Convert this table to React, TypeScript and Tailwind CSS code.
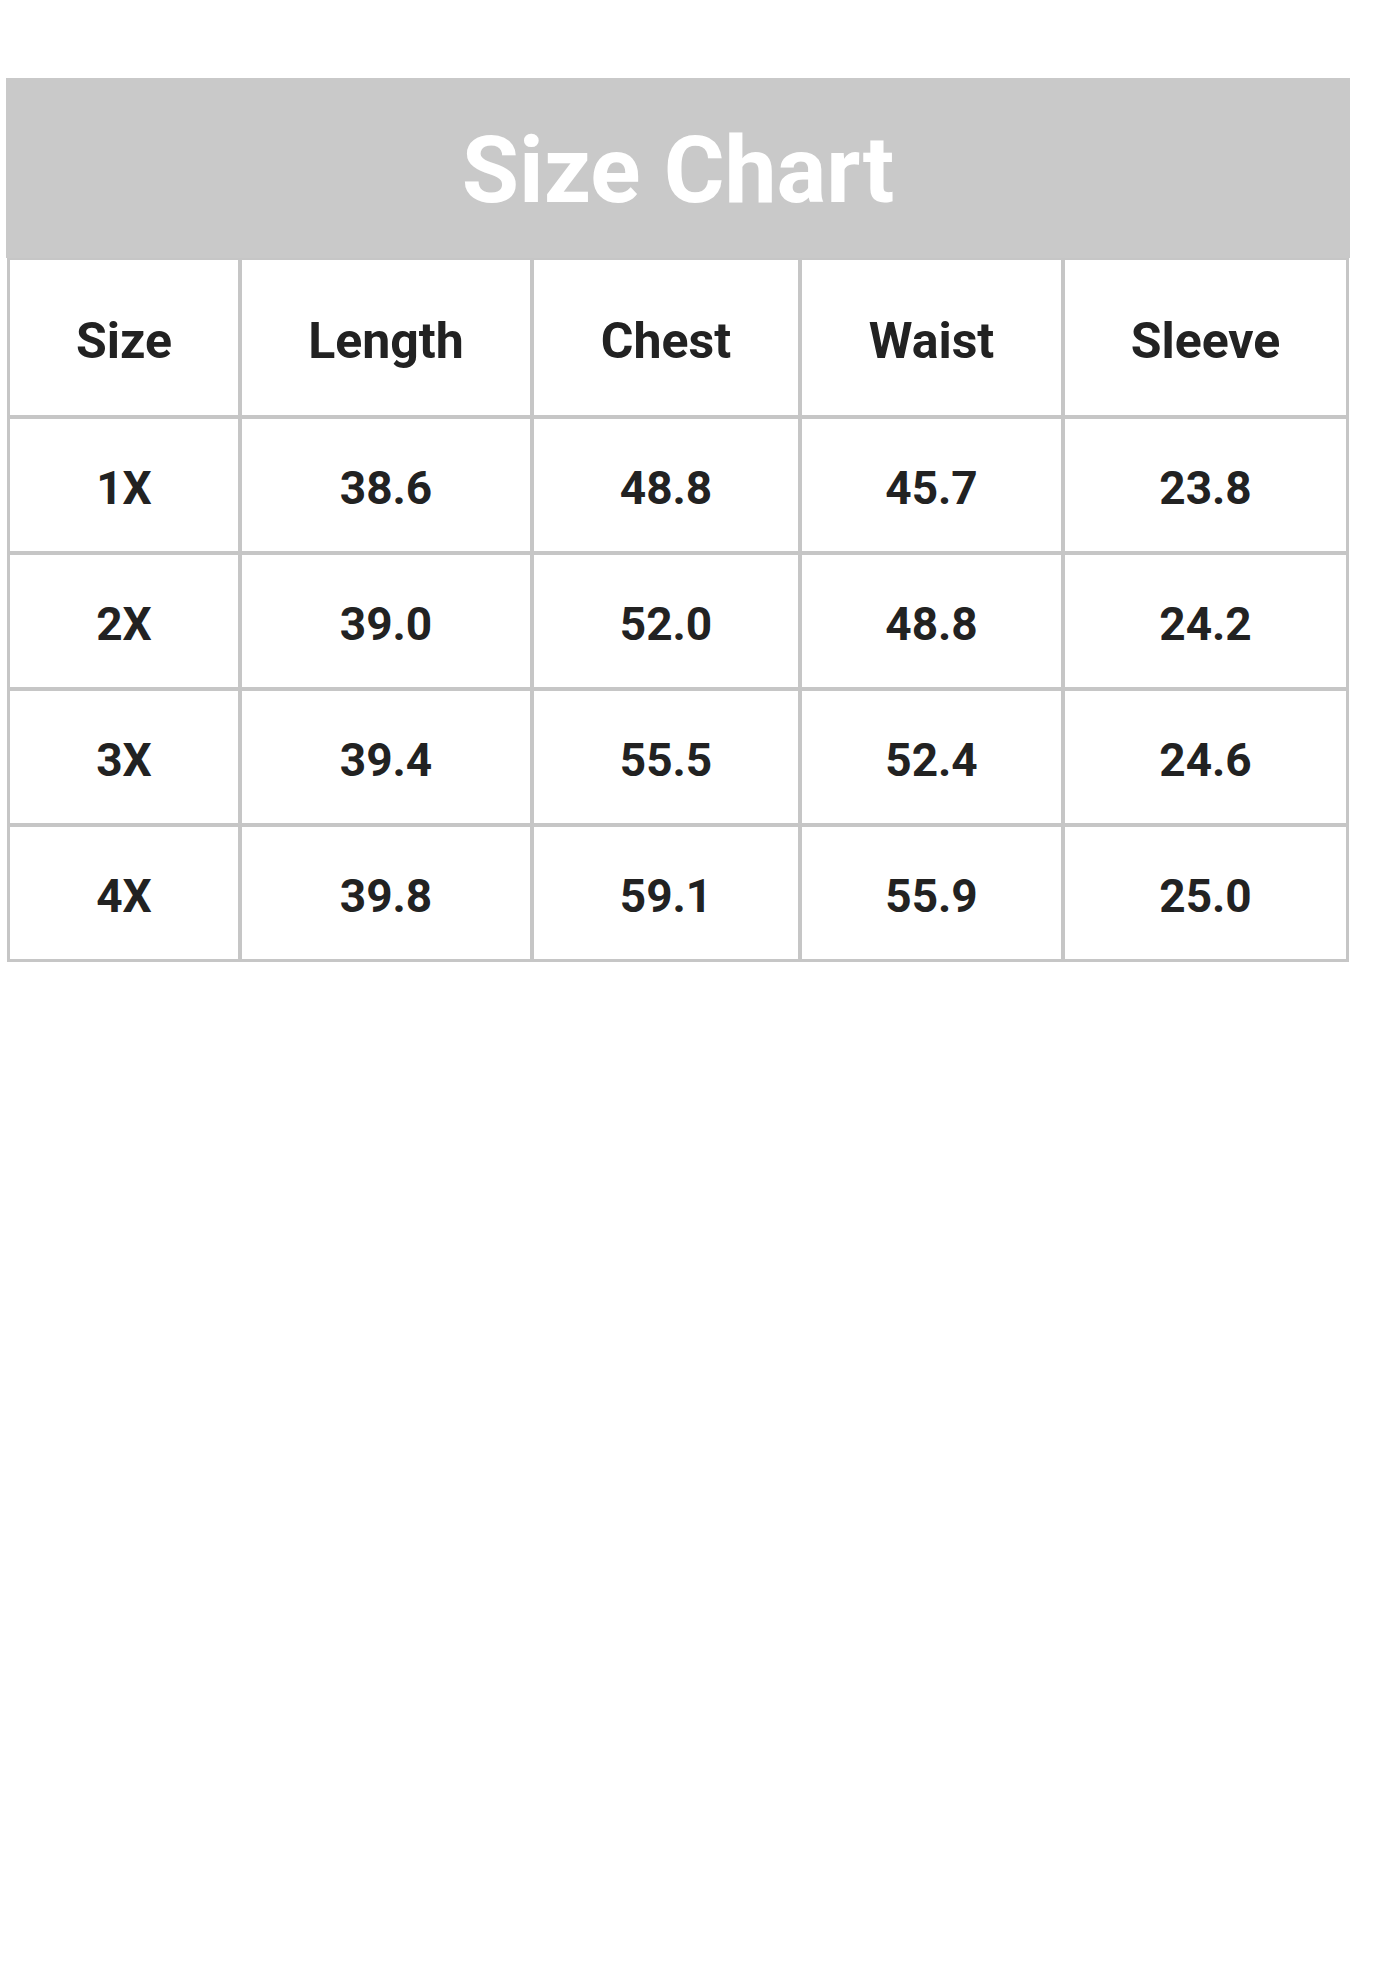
const headers = ["Size", "Length", "Chest", "Waist", "Sleeve"];

const rows = [
  ["1X", "38.6", "48.8", "45.7", "23.8"],
  ["2X", "39.0", "52.0", "48.8", "24.2"],
  ["3X", "39.4", "55.5", "52.4", "24.6"],
  ["4X", "39.8", "59.1", "55.9", "25.0"],
];

function Cell({ children, head }: { children: React.ReactNode; head?: boolean }) {
  return (
    <div
      className={
        head
          ? "flex items-center justify-center bg-white pt-[6px] text-[50px] font-bold leading-none text-[#222222]"
          : "flex items-center justify-center bg-white pt-[6px] text-[46px] font-bold leading-none text-[#222222]"
      }
    >
      {children}
    </div>
  );
}

export default function App() {
  return (
    <div
      className="min-h-[1986px] w-[1380px] bg-white pt-[78px]"
      style={{ fontFamily: "Roboto, 'Liberation Sans', sans-serif" }}
    >
      <div className="ml-[6px] w-[1344px]">
        <div className="flex h-[180px] items-center justify-center bg-[#c9c9c9] pt-[5px]">
          <h1 className="text-[93px] font-bold leading-none text-white">Size Chart</h1>
        </div>
        <div className="ml-[1px] grid w-[1342px] grid-cols-[228px_288px_264px_259px_281px] grid-rows-[155px_132px_132px_132px_132px] gap-[4px] bg-[#c6c6c6] px-[3px] pt-[2px] pb-[3px]">
          {headers.map((h) => (
            <Cell key={h} head>
              {h}
            </Cell>
          ))}
          {rows.map((row, i) =>
            row.map((v, j) => <Cell key={`${i}-${j}`}>{v}</Cell>)
          )}
        </div>
      </div>
    </div>
  );
}
